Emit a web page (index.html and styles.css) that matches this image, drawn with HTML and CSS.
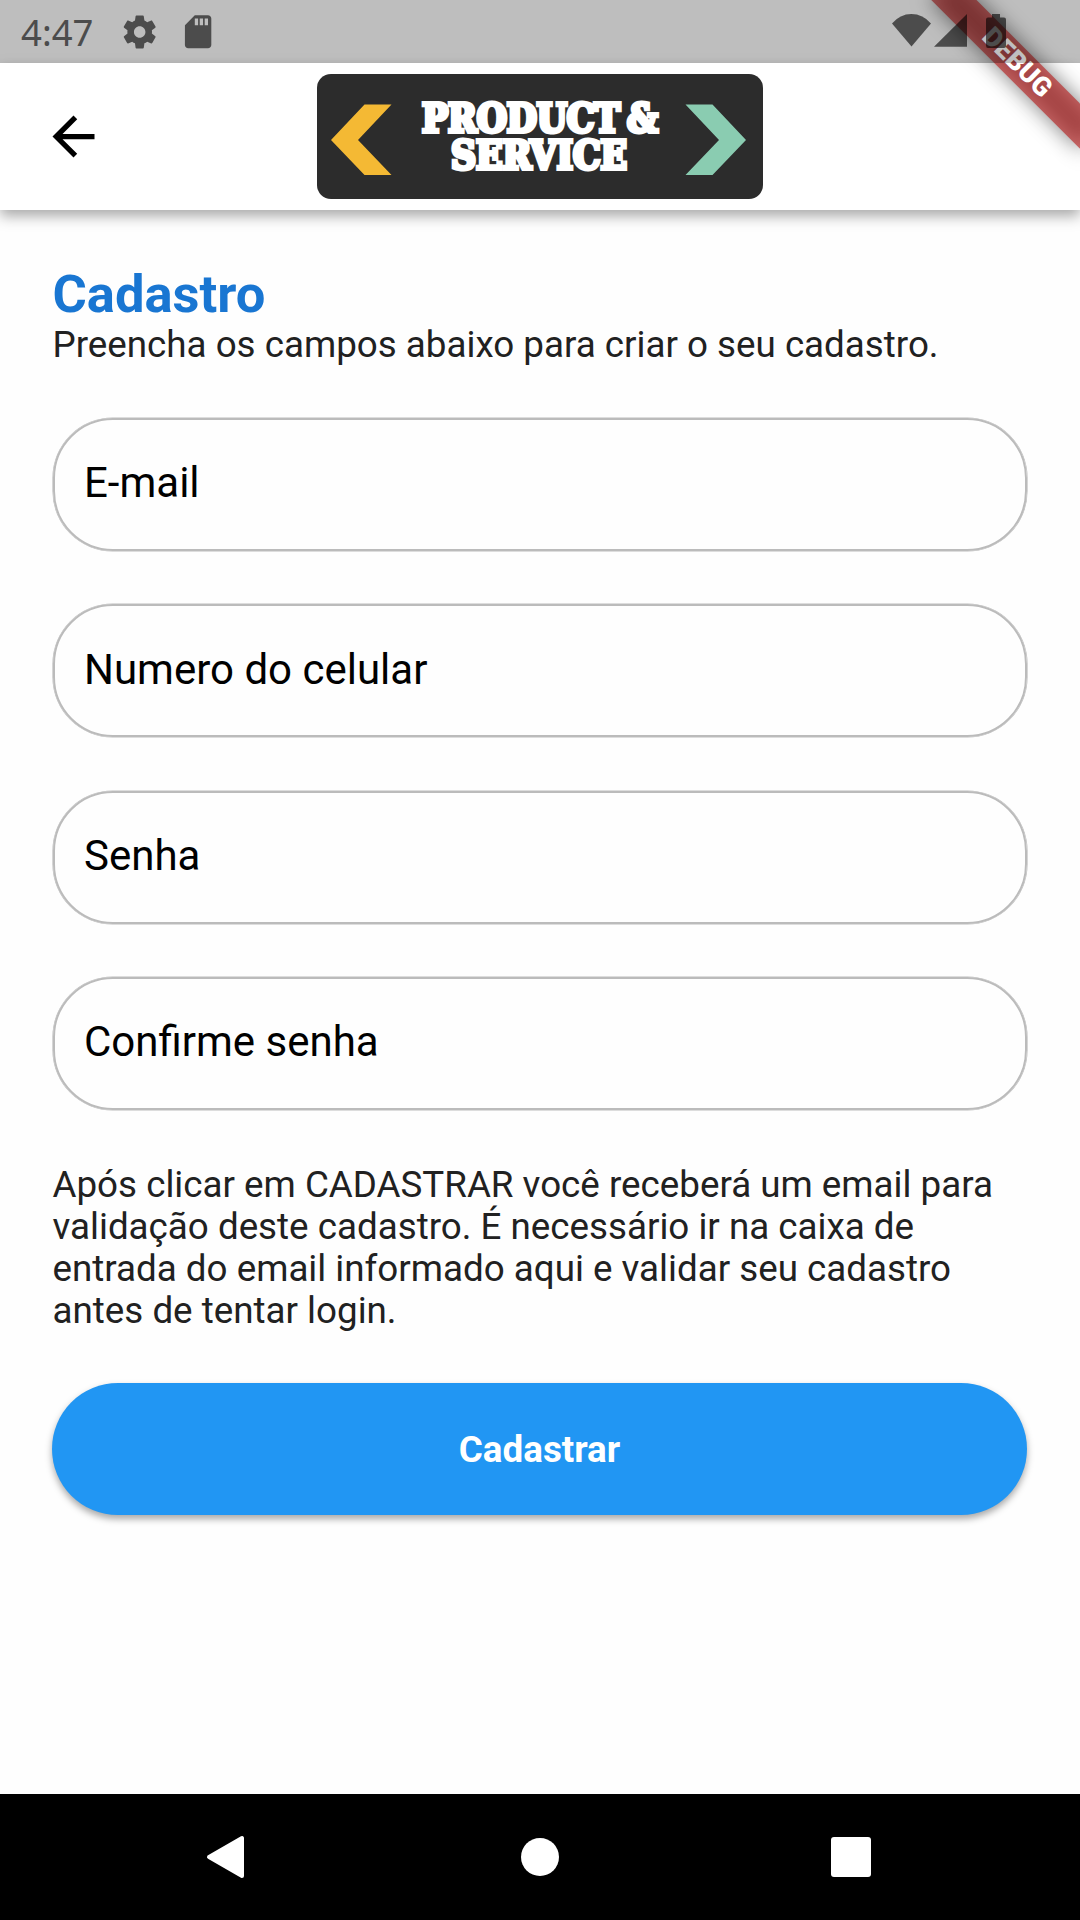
FILE: index.html
```html
<!DOCTYPE html>
<html lang="pt-BR">
<head>
<meta charset="utf-8">
<title>Cadastro</title>
<link rel="stylesheet" href="styles.css">
</head>
<body>
<div class="screen">
  <div class="debug-clip"><div class="debug-banner"><span class="debug-text">DEBUG</span></div></div>

  <div class="status-bar">
    <span class="clock">4:47</span>
    <svg class="status-icons" width="100" height="63" viewBox="0 0 100 63">
      <path transform="translate(-2 12.3) scale(1.64)" d="M19.43 12.98c.04-.32.07-.64.07-.98s-.03-.66-.07-.98l2.11-1.65c.19-.15.24-.42.12-.64l-2-3.46c-.12-.22-.39-.3-.61-.22l-2.49 1c-.52-.4-1.08-.73-1.69-.98l-.38-2.65C14.46 2.18 14.25 2 14 2h-4c-.25 0-.46.18-.49.42l-.38 2.65c-.61.25-1.17.59-1.69.98l-2.49-1c-.23-.09-.49 0-.61.22l-2 3.46c-.13.22-.07.49.12.64l2.11 1.65c-.04.32-.07.65-.07.98s.03.66.07.98l-2.11 1.65c-.19.15-.24.42-.12.64l2 3.46c.12.22.39.3.61.22l2.49-1c.52.4 1.08.73 1.69.98l.38 2.65c.03.24.24.42.49.42h4c.25 0 .46-.18.49-.42l.38-2.65c.61-.25 1.17-.59 1.69-.98l2.49 1c.23.09.49 0 .61-.22l2-3.46c.12-.22.07-.49-.12-.64l-2.11-1.65zM12 15.5c-1.93 0-3.500-1.570-3.500-3.500s1.570-3.500 3.500-3.500 3.500 1.570 3.500 3.500-1.570 3.500-3.500 3.500z"/>
      <path transform="translate(56.300 12.000) scale(1.650)" d="M18 2h-8L4.020 8 4 20c0 1.100.900 2 2 2h12c1.100 0 2-.900 2-2V4c0-1.100-.900-2-2-2zm-6 6h-2V4h2v4zm3 0h-2V4h2v4zm3 0h-2V4h2v4z"/>
    </svg>
    <svg class="signal-icons" width="130" height="63" viewBox="0 0 130 63">
      <path d="M2 23.500Q10 14 21.300 14Q33 14 41 23.500L21.500 46.500Z"/>
      <path d="M44 46.800L77 14V46.800Z"/>
      <path d="M102 14H110V17.500H114Q116 17.500 116 19.500V45.500Q116 48 114 48H98Q96 48 96 45.500V19.500Q96 17.500 98 17.500H102Z"/>
    </svg>
  </div>

  <header class="app-bar">
    <svg class="back" width="63" height="63" viewBox="0 0 24 24"><path d="M20 11H7.830l5.590-5.590L12 4l-8 8 8 8 1.410-1.410L7.830 13H20v-2z"/></svg>
    <svg class="logo" width="446" height="125" viewBox="0 0 446 125">
      <path fill="#f4b934" d="M14 66L47.500 30.500H74.500L41 66L74.500 101H47.500Z"/>
      <path fill="#8accb1" d="M429 66L395.500 30.500H368.500L402 66L368.500 101H395.500Z"/>
      <g class="logo-text">
        <text x="105" y="57.500" textLength="198" lengthAdjust="spacing">PRODUCT</text>
        <text x="310" y="57.500" textLength="31" lengthAdjust="spacingAndGlyphs">&amp;</text>
        <text x="134" y="94.500" textLength="176" lengthAdjust="spacing">SERVICE</text>
      </g>
    </svg>
  </header>

  <main class="content">
    <h1 class="title">Cadastro</h1>
    <p class="text">Preencha os campos abaixo para criar o seu cadastro.</p>
    <div class="fields">
      <div class="field">E-mail</div>
      <div class="field">Numero do celular</div>
      <div class="field">Senha</div>
      <div class="field">Confirme senha</div>
    </div>
    <p class="text">Após clicar em CADASTRAR você receberá um email para validação deste cadastro. É necessário ir na caixa de entrada do email informado aqui e validar seu cadastro antes de tentar login.</p>
    <button class="submit">Cadastrar</button>
  </main>

  <nav class="nav-bar">
    <svg width="1080" height="126" viewBox="0 0 1080 126">
      <path stroke="#fff" stroke-width="4" stroke-linejoin="round" d="M209 63L242 44V82Z"/>
      <circle cx="540" cy="63" r="19"/>
      <rect x="831" y="43" width="40" height="40" rx="3"/>
    </svg>
  </nav>
</div>
</body>
</html>
```
FILE: styles.css
```css
* { box-sizing: border-box; }

body {
  margin: 0;
  background: #fff;
  font-family: Roboto, "Noto Sans", sans-serif;
}

.screen {
  position: relative;
  display: flex;
  flex-direction: column;
  width: 1080px;
  height: 1920px;
  overflow: hidden;
  background: #fefefe;
}

/* The banner sits above the app bar but under the translucent status bar. */
.debug-clip {
  position: absolute;
  inset: 0;
  z-index: 2;
  overflow: hidden;
  pointer-events: none;
}

.debug-banner {
  position: absolute;
  top: 47px;
  left: 912px;
  width: 210px;
  height: 31.5px;
  transform: rotate(45deg);
  display: flex;
  align-items: center;
  justify-content: center;
}

.debug-banner::before,
.debug-banner::after {
  content: "";
  position: absolute;
  inset: 0;
}

.debug-banner::before {
  background: rgba(0, 0, 0, 0.5);
  filter: blur(10.4px);
}

.debug-banner::after { background: rgba(183, 28, 28, 0.627); }

.debug-text {
  position: relative;
  z-index: 1;
  color: #fff;
  font-size: 26.8px;
  font-weight: 900;
  line-height: 31px;
}

.status-bar {
  position: relative;
  z-index: 3;
  display: flex;
  flex: none;
  align-items: center;
  height: 63px;
  padding: 0 60px 0 21px;
  background: rgba(0, 0, 0, 0.25);
}

.clock {
  width: 101px;
  padding-top: 2px;
  color: #4c4c4c;
  font-family: "Noto Sans", sans-serif;
  font-size: 36.5px;
  line-height: 61px;
}

.status-icons { fill: #4c4c4c; }

.signal-icons {
  margin-left: auto;
  fill: rgba(0, 0, 0, 0.6);
}

.app-bar {
  position: relative;
  z-index: 1;
  display: flex;
  flex: none;
  align-items: center;
  height: 147px;
  padding-left: 42px;
  background: #fff;
  box-shadow: 0 6px 13px rgba(0, 0, 0, 0.34);
}

.logo {
  margin-left: 212px;
  background: #2c2c2c;
  border-radius: 14px;
}

.logo-text {
  fill: #fff;
  stroke: #fff;
  stroke-width: 4px;
  font-family: "DejaVu Serif", serif;
  font-size: 38.5px;
  font-weight: 700;
  font-stretch: condensed;
}

.content {
  display: flex;
  flex: 1;
  flex-direction: column;
  padding: 52.5px 53px 0 52px;
}

.title {
  margin: 0 0 -2px 0.5px;
  color: #1976d2;
  font-size: 52.5px;
  font-weight: 700;
  line-height: 63px;
}

.text {
  margin: 0 0 0 0.5px;
  color: #212121;
  font-size: 36.75px;
  line-height: 42px;
}

.fields {
  display: flex;
  flex-direction: column;
  gap: 53.4px;
  margin: 52.5px 0 53.6px 1px;
}

.field {
  display: flex;
  align-items: center;
  height: 133px;
  padding: 0 0 3.6px 29px;
  border: 2px solid #bbb;
  border-radius: 60px;
  box-shadow: 0 0 0 0.6px #bbb;
  color: #000;
  font-size: 42px;
}

.submit {
  height: 132px;
  margin-top: 51.2px;
  padding: 2px 0 0;
  border: 0;
  border-radius: 66px;
  background: #2196f3;
  box-shadow: 0 4px 7px rgba(0, 0, 0, 0.34);
  color: #fff;
  font: 700 36.75px Roboto, sans-serif;
}

.nav-bar {
  flex: none;
  height: 126px;
  background: #000;
  fill: #fff;
}
```
